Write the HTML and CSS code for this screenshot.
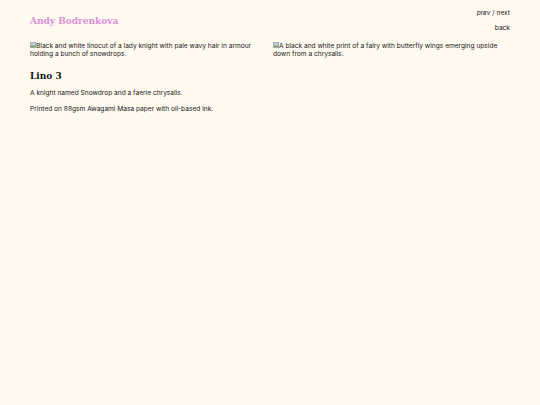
FILE: index.html
```html
<!DOCTYPE html>
<html lang="en">
<head>
    <meta charset="UTF-8">
    <meta name="viewport" content="width=device-width, initial-scale=1.0">
    <title>Lino 3 - Andy Bodrenkova</title>
    <link rel="stylesheet" href="styles.css">
</head>
<body>
    <div class="page">
        <header class="site-header">
            <a class="site-title" href="#">Andy Bodrenkova</a>
            <nav class="print-nav">
                <p><a class="prev" href="#">prev</a> / <a href="#">next</a></p>
                <p><a href="#">back</a></p>
            </nav>
        </header>

        <div class="prints">
            <figure class="print">
                <span class="broken-img">
                    <svg class="img-icon" viewBox="0 0 6 6">
                        <rect x="0.5" y="0.5" width="5" height="5" fill="#f4f4f4" stroke="#a9a9a9"/>
                        <rect x="1" y="3.2" width="4" height="1.8" fill="#6cae5a"/>
                        <rect x="1" y="1" width="4" height="2.2" fill="#b9d3ee"/>
                    </svg>Black and white linocut of a lady knight with pale wavy hair in armour holding a bunch of snowdrops.
                </span>
            </figure>
            <figure class="print">
                <span class="broken-img">
                    <svg class="img-icon" viewBox="0 0 6 6">
                        <rect x="0.5" y="0.5" width="5" height="5" fill="#f4f4f4" stroke="#a9a9a9"/>
                        <rect x="1" y="3.2" width="4" height="1.8" fill="#6cae5a"/>
                        <rect x="1" y="1" width="4" height="2.2" fill="#b9d3ee"/>
                    </svg>A black and white print of a fairy with butterfly wings emerging upside down from a chrysalis.
                </span>
            </figure>
        </div>

        <h2 class="print-title">Lino 3</h2>
        <p class="print-text">A knight named Snowdrop and a faerie chrysalis.</p>
        <p class="print-text">Printed on 88gsm Awagami Masa paper with oil-based ink.</p>
    </div>
</body>
</html>
```

FILE: styles.css
```css
* {
    margin: 0;
    padding: 0;
    box-sizing: border-box;
}

body {
    font-family: 'Inter', 'Open Sans', sans-serif;
    font-size: 6.6px;
    line-height: 1.28;
    background: #fffaf0;
    color: #161616;
}

a {
    color: inherit;
    text-decoration: none;
}

.page {
    padding: 9px 30px 30px;
}

.site-header {
    display: flex;
    justify-content: space-between;
    align-items: flex-start;
}

.site-title {
    font-family: 'DejaVu Serif', serif;
    font-weight: bold;
    font-size: 9px;
    color: #d98fd8;
    margin-top: 7px;
}

.print-nav {
    text-align: right;
}

.print-nav p {
    margin-bottom: 7px;
}

.prev {
    font-style: italic;
}

.prints {
    display: grid;
    grid-template-columns: 1fr 1fr;
    gap: 6px;
    margin-top: 2px;
}

.broken-img {
    display: block;
}

.img-icon {
    width: 6px;
    height: 6px;
    vertical-align: -0.5px;
}

.print-title {
    font-family: 'DejaVu Serif', serif;
    font-weight: bold;
    font-size: 9px;
    margin: 12px 0 7px;
}

.print-text {
    margin-bottom: 7px;
}
```
